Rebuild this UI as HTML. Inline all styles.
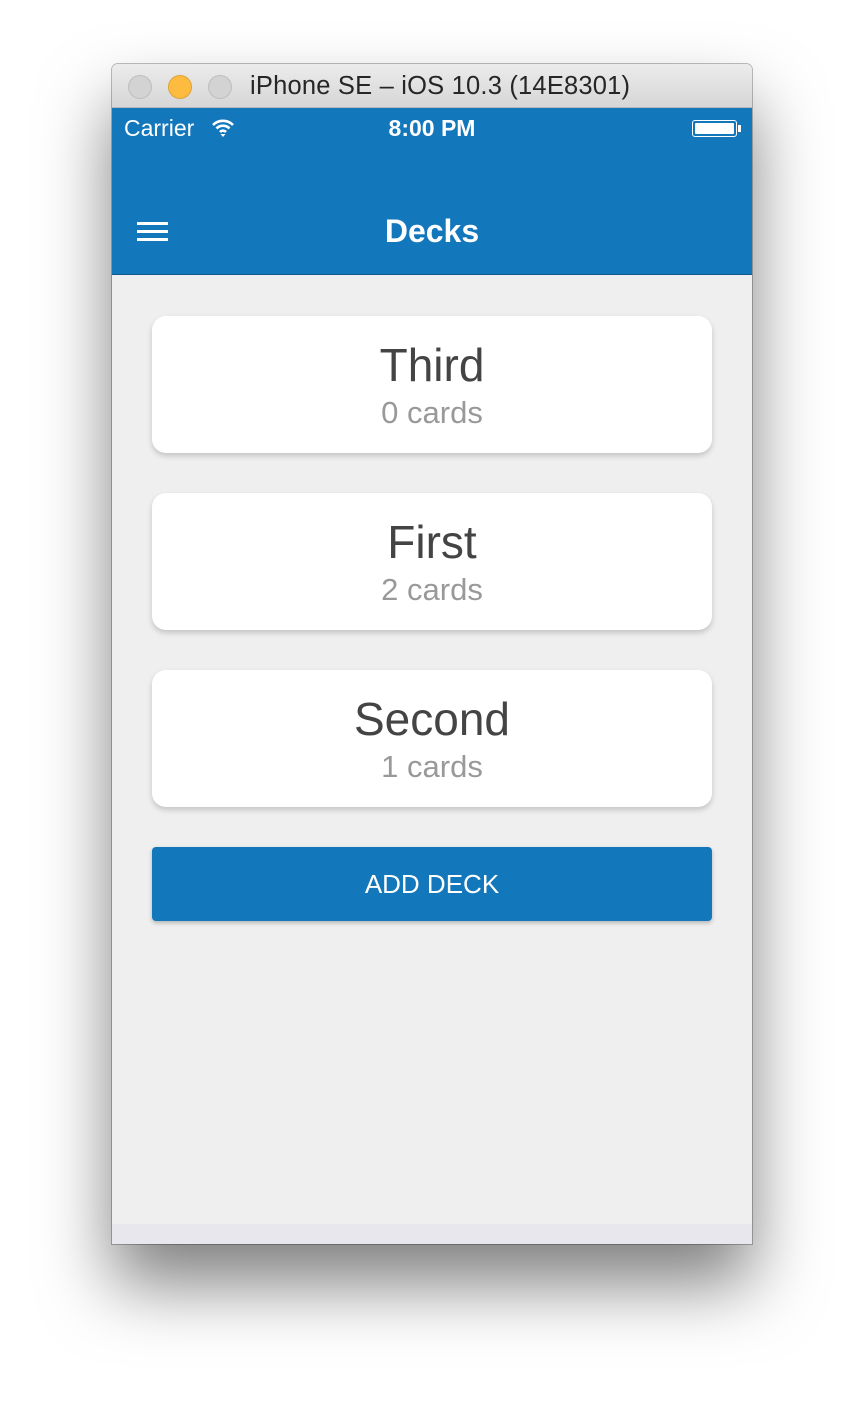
<!DOCTYPE html>
<html><head><meta charset="utf-8"><style>
*{margin:0;padding:0;box-sizing:border-box}
body{width:864px;height:1404px;background:#fff;position:relative;overflow:hidden;font-family:"Liberation Sans",sans-serif}
.win{position:absolute;left:112px;top:64px;width:640px;height:1180px;border-radius:6px 6px 0 0;box-shadow:0 40px 70px rgba(0,0,0,.5),0 0 0 1px rgba(0,0,0,.25);overflow:hidden;background:#efefef}
.tb{height:44px;background:linear-gradient(#ececec,#d6d6d6);border-bottom:1px solid #b8b8b8;position:relative}
.dot{position:absolute;top:11px;width:24px;height:24px;border-radius:50%;background:#d3d3d3;border:1px solid #bdbdbd}
.tt{position:absolute;left:138px;top:8px;font-size:25.5px;color:#262626;letter-spacing:0.2px}
.blue{position:absolute;top:44px;left:0;width:640px;height:167px;background:#1377bc;border-bottom:1px solid #0d5a8f;color:#fff}
.card{position:absolute;left:40px;width:560px;height:137px;background:#fff;border-radius:14px;box-shadow:0 3px 6px rgba(0,0,0,.18);text-align:center}
.card .a{font-size:46px;color:#444;margin-top:22px;line-height:54px}
.card .b{font-size:31px;color:#999;line-height:36px;margin-top:3px}
</style></head><body>
<div class="win">
 <div class="tb">
  <div class="dot" style="left:16px"></div>
  <div class="dot" style="left:56px;background:#fdbc40;border-color:#dea236"></div>
  <div class="dot" style="left:96px"></div>
  <div class="tt">iPhone SE – iOS 10.3 (14E8301)</div>
 </div>
 <div class="blue">
  <div style="position:absolute;left:12px;top:7px;font-size:23px">Carrier</div>
  <svg style="position:absolute;left:99px;top:10px" width="24" height="20" viewBox="0 0 24 20"><path d="M2 7a14 14 0 0 1 20 0M5.5 10.5a9 9 0 0 1 13 0M9 14a4 4 0 0 1 6 0" stroke="#fff" stroke-width="2.6" fill="none"/><path d="M12 19l-2.5-3h5z" fill="#fff"/></svg>
  <div style="position:absolute;left:0;width:640px;text-align:center;top:7px;font-size:23px;font-weight:bold">8:00 PM</div>
  <div style="position:absolute;left:580px;top:12px;width:45px;height:17px;border:1.5px solid #fff;border-radius:3px;padding:2px"><div style="background:#fff;height:100%;border-radius:1px"></div></div>
  <div style="position:absolute;left:626px;top:17px;width:3px;height:7px;background:#fff"></div>
  <div style="position:absolute;left:25px;top:114px;width:31px;height:3px;background:#fff;box-shadow:0 8px 0 #fff,0 16px 0 #fff"></div>
  <div style="position:absolute;left:0;width:640px;text-align:center;top:105px;font-size:32px;font-weight:bold">Decks</div>
 </div>
 <div class="card" style="top:252px"><div class="a">Third</div><div class="b">0 cards</div></div>
 <div class="card" style="top:429px"><div class="a">First</div><div class="b">2 cards</div></div>
 <div class="card" style="top:606px"><div class="a">Second</div><div class="b">1 cards</div></div>
 <div style="position:absolute;left:40px;top:783px;width:560px;height:74px;background:#1377bc;border-radius:4px;box-shadow:0 2px 4px rgba(0,0,0,.25);color:#fff;font-size:26px;text-align:center;line-height:74px">ADD DECK</div>
 <div style="position:absolute;left:0;top:1160px;width:640px;height:20px;background:#e8e7ed"></div>
</div>
</body></html>
